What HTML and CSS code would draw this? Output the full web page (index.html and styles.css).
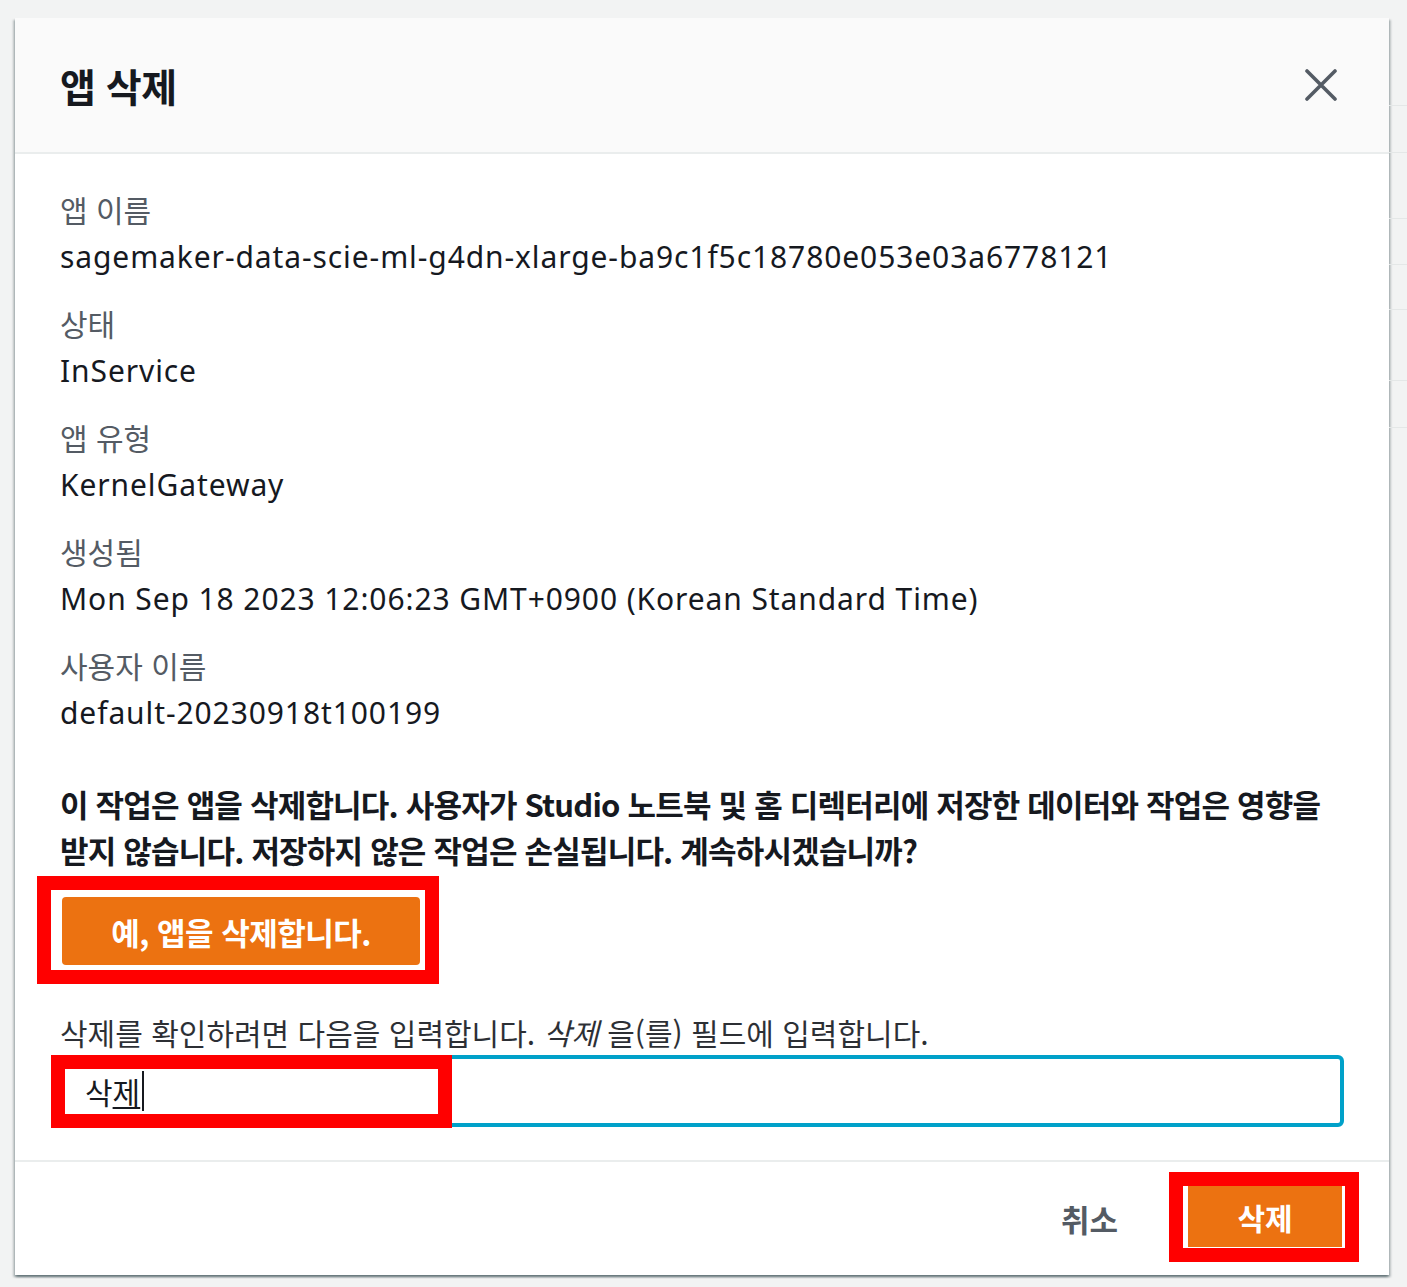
FILE: index.html
```html
<!DOCTYPE html>
<html lang="ko">
<head>
<meta charset="utf-8">
<title>앱 삭제</title>
<link rel="stylesheet" href="styles.css">
</head>
<body>
<div class="page">
  <div class="modal">
    <div class="modal-header">
      <h2 class="title">앱 삭제</h2>
      <button class="close" aria-label="닫기">
        <svg width="32" height="32" viewBox="0 0 32 32"><path d="M2 2 L30 30 M30 2 L2 30" stroke="#545b64" stroke-width="3.6" stroke-linecap="round" fill="none"/></svg>
      </button>
    </div>
    <div class="modal-body">
      <div class="field">
        <div class="label">앱 이름</div>
        <div class="value">sagemaker-data-scie-ml-g4dn-xlarge-ba9c1f5c18780e053e03a6778121</div>
      </div>
      <div class="field">
        <div class="label">상태</div>
        <div class="value">InService</div>
      </div>
      <div class="field">
        <div class="label">앱 유형</div>
        <div class="value">KernelGateway</div>
      </div>
      <div class="field">
        <div class="label">생성됨</div>
        <div class="value">Mon Sep 18 2023 12:06:23 GMT+0900 (Korean Standard Time)</div>
      </div>
      <div class="field">
        <div class="label">사용자 이름</div>
        <div class="value">default-20230918t100199</div>
      </div>
      <p class="warning">이 작업은 앱을 삭제합니다. 사용자가 Studio 노트북 및 홈 디렉터리에 저장한 데이터와 작업은 영향을 받지 않습니다. 저장하지 않은 작업은 손실됩니다. 계속하시겠습니까?</p>
      <div class="confirm-wrap">
        <button class="btn-primary btn-confirm">예, 앱을 삭제합니다.</button>
        <span class="mark mark-confirm"></span>
      </div>
      <div class="input-label">삭제를 확인하려면 다음을 입력합니다. <em>삭제</em> 을(를) 필드에 입력합니다.</div>
      <div class="input-wrap">
        <div class="text-input"><span>삭</span><span class="composing">제</span><span class="caret"></span></div>
        <span class="mark mark-input"></span>
      </div>
    </div>
    <div class="modal-footer">
      <button class="btn-link">취소</button>
      <div class="delete-wrap">
        <button class="btn-primary btn-delete">삭제</button>
        <span class="mark mark-delete"></span>
      </div>
    </div>
  </div>
  <div class="backdrop">
    <div class="bd-row r1"></div>
    <div class="bd-row r2"></div>
    <div class="bd-row r3"></div>
    <div class="bd-row r4"></div>
    <div class="bd-row r5"></div>
    <div class="bd-row r6"></div>
    <div class="bd-row r7"></div>
  </div>
</div>
</body>
</html>
```

FILE: styles.css
```css
* { box-sizing: border-box; }
html, body { margin: 0; padding: 0; }
body {
  background: #f2f3f3;
  font-family: "Noto Sans", "Noto Sans CJK KR", sans-serif;
  color: #16191f;
  width: 1407px;
  height: 1287px;
  overflow: hidden;
}
.page {
  display: flex;
  align-items: flex-start;
  padding-left: 15px;
}
.modal {
  width: 1374px;
  margin-top: 18px;
  background: #fff;
  box-shadow: 0 2px 2px rgba(0, 28, 36, 0.35), 2px 2px 2px rgba(0, 28, 36, 0.2), -2px 2px 2px rgba(0, 28, 36, 0.2);
  flex: none;
}
.modal-header {
  height: 136px;
  background: #fafafa;
  border-bottom: 2px solid #eaeded;
  display: flex;
  align-items: center;
  justify-content: space-between;
  padding: 0 52px 0 45px;
}
.title {
  margin: 0;
  font-size: 39px;
  font-weight: 700;
  font-family: "Noto Sans CJK KR", sans-serif;
  color: #16191f;
  letter-spacing: -0.5px;
}
.close {
  border: 0;
  background: transparent;
  padding: 0;
  width: 32px;
  height: 32px;
  display: flex;
}
.modal-body {
  padding: 32px 45px 33px 45px;
}
.field {
  margin-bottom: 20px;
}
.label {
  font-size: 30px;
  line-height: 47px;
  color: #545b64;
  font-family: "Noto Sans CJK KR", sans-serif;
}
.value {
  font-size: 30px;
  line-height: 47px;
  color: #16191f;
  letter-spacing: 0.03em;
}
.warning {
  margin: 45px 0 0 0;
  font-size: 31px;
  line-height: 46px;
  font-weight: 700;
  color: #16191f;
  font-family: "Noto Sans CJK KR", sans-serif;
  letter-spacing: -0.8px;
  word-break: keep-all;
}
.confirm-wrap {
  position: relative;
  margin-top: 24px;
  margin-left: 2px;
  width: 358px;
}
.btn-primary {
  border: 0;
  background: #ec7211;
  color: #fff;
  font-family: "Noto Sans CJK KR", sans-serif;
  font-weight: 700;
  font-size: 30px;
  border-radius: 4px;
  padding: 0;
  display: flex;
  align-items: center;
  justify-content: center;
}
.btn-confirm {
  width: 358px;
  height: 68px;
  font-size: 31px;
  letter-spacing: -0.5px;
}
.mark {
  position: absolute;
  border: 14px solid #ff0000;
  pointer-events: none;
}
.mark-confirm {
  left: -25px;
  right: -19px;
  top: -21px;
  bottom: -19px;
}
.input-label {
  margin-top: 44px;
  font-size: 30px;
  line-height: 46px;
  color: #16191f;
  font-family: "Noto Sans CJK KR", sans-serif;
  opacity: 0.9;
}
.input-label em {
  font-style: italic;
}
.input-wrap {
  position: relative;
}
.text-input {
  height: 72px;
  border: 4px solid #00a1c9;
  border-radius: 6px;
  padding-left: 21px;
  display: flex;
  align-items: center;
  font-size: 30px;
  font-family: "Noto Sans CJK KR", sans-serif;
  color: #16191f;
}
.composing {
  text-decoration: underline;
  text-decoration-thickness: 2px;
  text-underline-offset: 3px;
}
.caret {
  display: inline-block;
  width: 2px;
  height: 40px;
  background: #16191f;
  margin-left: 2px;
}
.mark-input {
  left: -9px;
  top: 0;
  width: 401px;
  height: 73px;
}
.modal-footer {
  border-top: 2px solid #eaeded;
  height: 115px;
  display: flex;
  align-items: center;
  justify-content: flex-end;
  padding-right: 47px;
}
.btn-link {
  border: 0;
  background: transparent;
  color: #545b64;
  font-family: "Noto Sans CJK KR", sans-serif;
  font-weight: 700;
  font-size: 31px;
  padding: 0;
  margin-right: 70px;
}
.delete-wrap {
  position: relative;
  margin-top: -4px;
}
.btn-delete {
  width: 154px;
  height: 61px;
  border-radius: 0;
}
.mark-delete {
  left: -19px;
  right: -17px;
  top: -14px;
  bottom: -15px;
}
.backdrop {
  flex: 1;
  display: flex;
  flex-direction: column;
}
.bd-row { border-bottom: 1px solid #e4e7e7; }
.r1 { height: 106px; }
.r2 { height: 47px; }
.r3 { height: 66px; }
.r4 { height: 46px; }
.r5 { height: 45px; }
.r6 { height: 71px; }
.r7 { height: 47px; }
```
